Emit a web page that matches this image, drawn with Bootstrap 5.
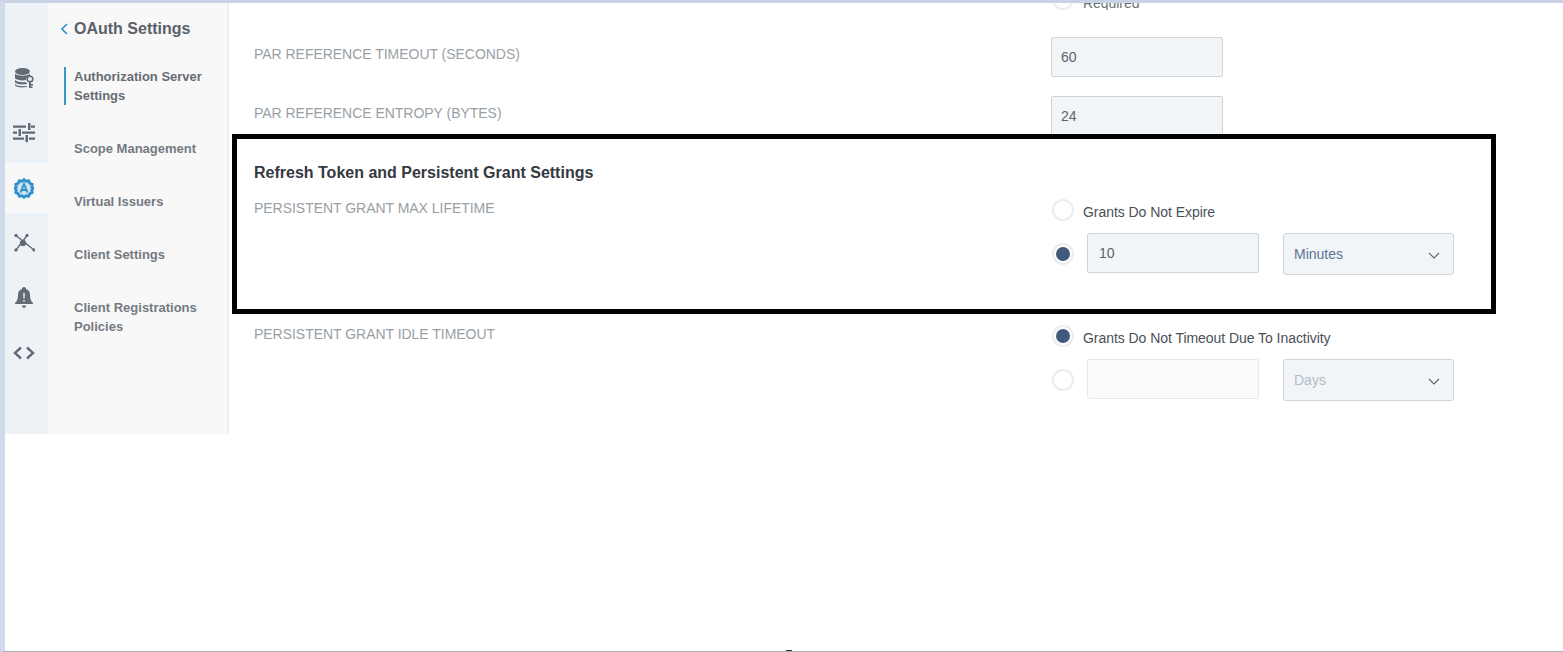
<!DOCTYPE html>
<html lang="en">
<head>
<meta charset="utf-8">
<title>OAuth Settings</title>
<link rel="stylesheet" href="https://cdn.jsdelivr.net/npm/bootstrap@5.3.0/dist/css/bootstrap.min.css">
<style>
html,body{height:100%;margin:0;overflow:hidden;background:#fff}
body{font-family:"Liberation Sans",Arial,sans-serif;color:#3d454d;font-size:14px}
.shot-frame{height:652px;border-left:5px solid #cfdaea;border-top:3px solid #c7d3e4;border-bottom:1px solid #a9b0b5;position:relative}
.app-shell{height:431px}
.rail{width:43px;background:#edf2f7;padding-top:47px}
.rail-item{height:55px;color:#636a73;padding-right:5px}
.rail-item.is-on{height:50px;margin:3px 0 2px;background:#f8f8f8;color:#2e92c9}
.side-menu{width:181px;background:#f8f8f8;border-right:2px solid #eeeeee}
.side-head{height:24px;margin-top:14px;padding-left:13px;font-size:16px;font-weight:700;color:#5b6168;gap:6px}
.side-list{margin-top:26px;padding-left:16px}
.side-link{display:block;width:150px;padding-left:10px;color:#747a82;font-size:13px;font-weight:700;line-height:19px;margin-bottom:34px;text-decoration:none}
.side-link.is-on{border-left:2px solid #3b97cb;color:#666c74;padding-left:8px}
.content-pane{padding-left:25px;position:relative}
.field-row{display:flex}
.label-col{width:797px;font-size:14px;color:#98a0a6;text-transform:uppercase;line-height:16px;letter-spacing:-.03px}
.label-pad{padding-top:9px}
.gap-first{margin-top:27px}
.gap-second{margin-top:19px}
.gap-title{margin-top:27px}
.gap-group{margin-top:17px}
.gap-idle{margin-top:51px}
.gap-inputs{margin-top:12px}
.opt-col{margin-top:-1px}
.box-input{background:#f1f5f8;border:1px solid #ced4d8;border-radius:2px;color:#5c636b;font-size:14px;padding:0 9px;display:flex;align-items:center}
.wide-box{width:172px;height:40px}
.radio-dot{width:22px;height:22px;margin-left:1px;border-radius:50%;border:2px solid #eaecee;background:#fff;flex:none;display:flex;align-items:center;justify-content:center}
.radio-dot.is-set::after{content:"";width:14px;height:14px;border-radius:50%;background:#41597a}
.opt-text{font-size:14px;color:#4a5057;margin-left:9px;line-height:16px;margin-top:4px;letter-spacing:-.05px}
.num-box{width:172px;height:40px;margin:0 0 2px 13px;padding:0 11px}
.unit-box{width:171px;height:42px;margin-left:24px;justify-content:space-between;padding:0 13px 0 10px;color:#5d7390;border-radius:3px}
.unit-box svg{margin-top:3px}
.num-box.is-off{background:#fafbfb;border-color:#e6eaec}
.unit-box.is-off{color:#b4bcc3}
.section-title{font-size:16px;font-weight:700;color:#33393f;line-height:20px}
.top-clip{height:7px;overflow:hidden;margin-left:797px;align-items:flex-end}
.top-clip .opt-text{color:#6b7178;line-height:14px;margin-top:0}
.high-frame{position:absolute;left:227px;top:131px;width:1264px;height:180px;border:5px solid #000;pointer-events:none}
.bottom-tick{position:absolute;left:781px;bottom:0;width:6px;height:1px;background:#333}
</style>
</head>
<body>
<div class="shot-frame">
  <div class="app-shell d-flex">
    <nav class="rail d-flex flex-column" aria-label="Sections">
      <div class="rail-item d-flex justify-content-center align-items-center">
        <svg width="19" height="20" viewBox="0 0 19 20" fill="currentColor"><ellipse cx="7.500" cy="3.500" rx="7.500" ry="3.500"/><path d="M0 5.500c2 3 13 3 15 0v2.500c-1 .5-2 1-3 1.500-1 1-1 2-1 2.500C7 13 2 12 0 10.500zM0 12c2 2 7 2.500 10.500 2 .5.500 1 1 1.500 1v1C8 17 2 16.500 0 14.500zM0 16c2 2 7 2.500 12 2v1c-5 1-10 .5-12-1.500z"/><circle cx="15" cy="11" r="2.800" fill="none" stroke="currentColor" stroke-width="1.600"/><path d="M14 14h2v6h-2zM16 16h2v1.500h-2zM16 18.500h1.500V20H16z"/></svg>
      </div>
      <div class="rail-item d-flex justify-content-center align-items-center">
        <svg width="22" height="19" viewBox="0 0 22 19" fill="currentColor"><path d="M0 2.500h13v2.200H0zM18 2.500h4v2.200h-4zM15 0h2.500v7H15zM0 8.500h4v2.200H0zM9 8.500h13v2.200H9zM5.500 6H8v7H5.500zM0 14.500h11v2.200H0zM16 14.500h6v2.200h-6zM12.500 12H15v7h-2.500z"/></svg>
      </div>
      <div class="rail-item is-on d-flex justify-content-center align-items-center">
        <svg width="20" height="21" viewBox="0 0 20 21"><path d="M10 1.500l2 1.800 2.700-.6 1 2.600 2.600 1-.6 2.700 1.600 1.500-1.600 1.500.6 2.700-2.600 1-1 2.600-2.700-.6-2 1.800-2-1.800-2.700.6-1-2.600-2.600-1 .6-2.700L.7 10.500l1.600-1.500-.6-2.700 2.600-1 1-2.600 2.700.6z" fill="#cfe4f2" stroke="currentColor" stroke-width="2.800" stroke-linejoin="round"/><path d="M6.500 14.500L10 6l3.500 8.500M7.800 12h4.400" fill="none" stroke="currentColor" stroke-width="1.900"/></svg>
      </div>
      <div class="rail-item d-flex justify-content-center align-items-center">
        <svg width="22" height="20" viewBox="0 0 22 20" fill="currentColor" stroke="currentColor"><path d="M3 2.500L21 17M14 2.500L3 17" fill="none" stroke-width="1.400"/><circle cx="10" cy="10" r="2.800"/><circle cx="3" cy="2.500" r="1.200"/><circle cx="14" cy="2.500" r="1.200"/><circle cx="3" cy="17" r="1.200"/><circle cx="21" cy="17" r="1.200"/></svg>
      </div>
      <div class="rail-item d-flex justify-content-center align-items-center">
        <svg width="18" height="21" viewBox="0 0 18 21" fill="currentColor"><path d="M9 0c1.500 0 2 1 2 2 3 1 4 3 4 6 0 4 1 6 3 8v1H0v-1c2-2 3-4 3-8 0-3 1-5 4-6 0-1 .5-2 2-2z"/><path d="M7 18.500h4c0 1.500-1 2.500-2 2.500s-2-1-2-2.500z"/><path d="M8.200 6h1.600l-.2 5.500H8.400zM8.200 13h1.600v1.600H8.200z" fill="#edf2f7"/></svg>
      </div>
      <div class="rail-item d-flex justify-content-center align-items-center">
        <svg width="22" height="14" viewBox="0 0 22 14" fill="none" stroke="currentColor" stroke-width="2.400"><path d="M8 1.500L2 7l6 5.500M14 1.500L20 7l-6 5.500"/></svg>
      </div>
    </nav>
    <aside class="side-menu">
      <div class="side-head d-flex align-items-center">
        <svg width="7" height="12" viewBox="0 0 7 12" fill="none" stroke="#3b8fc4" stroke-width="1.600"><path d="M6 1L1 6l5 5"/></svg>
        <span>OAuth Settings</span>
      </div>
      <div class="side-list">
        <a class="side-link is-on" href="#">Authorization Server Settings</a>
        <a class="side-link" href="#">Scope Management</a>
        <a class="side-link" href="#">Virtual Issuers</a>
        <a class="side-link" href="#">Client Settings</a>
        <a class="side-link" href="#">Client Registrations Policies</a>
      </div>
    </aside>
    <main class="content-pane flex-grow-1">
      <div class="top-clip d-flex"><span class="radio-dot"></span><span class="opt-text">Required</span></div>
      <div class="field-row gap-first">
        <div class="label-col label-pad">PAR Reference Timeout (Seconds)</div>
        <div class="box-input wide-box">60</div>
      </div>
      <div class="field-row gap-second">
        <div class="label-col label-pad">PAR Reference Entropy (Bytes)</div>
        <div class="box-input wide-box">24</div>
      </div>
      <div class="section-title gap-title">Refresh Token and Persistent Grant Settings</div>
      <div class="field-row gap-group">
        <div class="label-col">Persistent Grant Max Lifetime</div>
        <div class="opt-col">
          <div class="d-flex align-items-center"><span class="radio-dot"></span><span class="opt-text">Grants Do Not Expire</span></div>
          <div class="d-flex align-items-center gap-inputs">
            <span class="radio-dot is-set"></span>
            <div class="box-input num-box">10</div>
            <div class="box-input unit-box"><span>Minutes</span><svg width="12" height="7" viewBox="0 0 12 7" fill="none" stroke="#5c636b" stroke-width="1.100"><path d="M1 1l5 5 5-5"/></svg></div>
          </div>
        </div>
      </div>
      <div class="field-row gap-idle">
        <div class="label-col">Persistent Grant Idle Timeout</div>
        <div class="opt-col">
          <div class="d-flex align-items-center"><span class="radio-dot is-set"></span><span class="opt-text">Grants Do Not Timeout Due To Inactivity</span></div>
          <div class="d-flex align-items-center gap-inputs">
            <span class="radio-dot"></span>
            <div class="box-input num-box is-off"></div>
            <div class="box-input unit-box is-off"><span>Days</span><svg width="12" height="7" viewBox="0 0 12 7" fill="none" stroke="#5c636b" stroke-width="1.100"><path d="M1 1l5 5 5-5"/></svg></div>
          </div>
        </div>
      </div>
    </main>
  </div>
  <div class="high-frame"></div>
  <div class="bottom-tick"></div>
</div>
<script src="https://cdn.jsdelivr.net/npm/bootstrap@5.3.0/dist/js/bootstrap.bundle.min.js"></script>
</body>
</html>
